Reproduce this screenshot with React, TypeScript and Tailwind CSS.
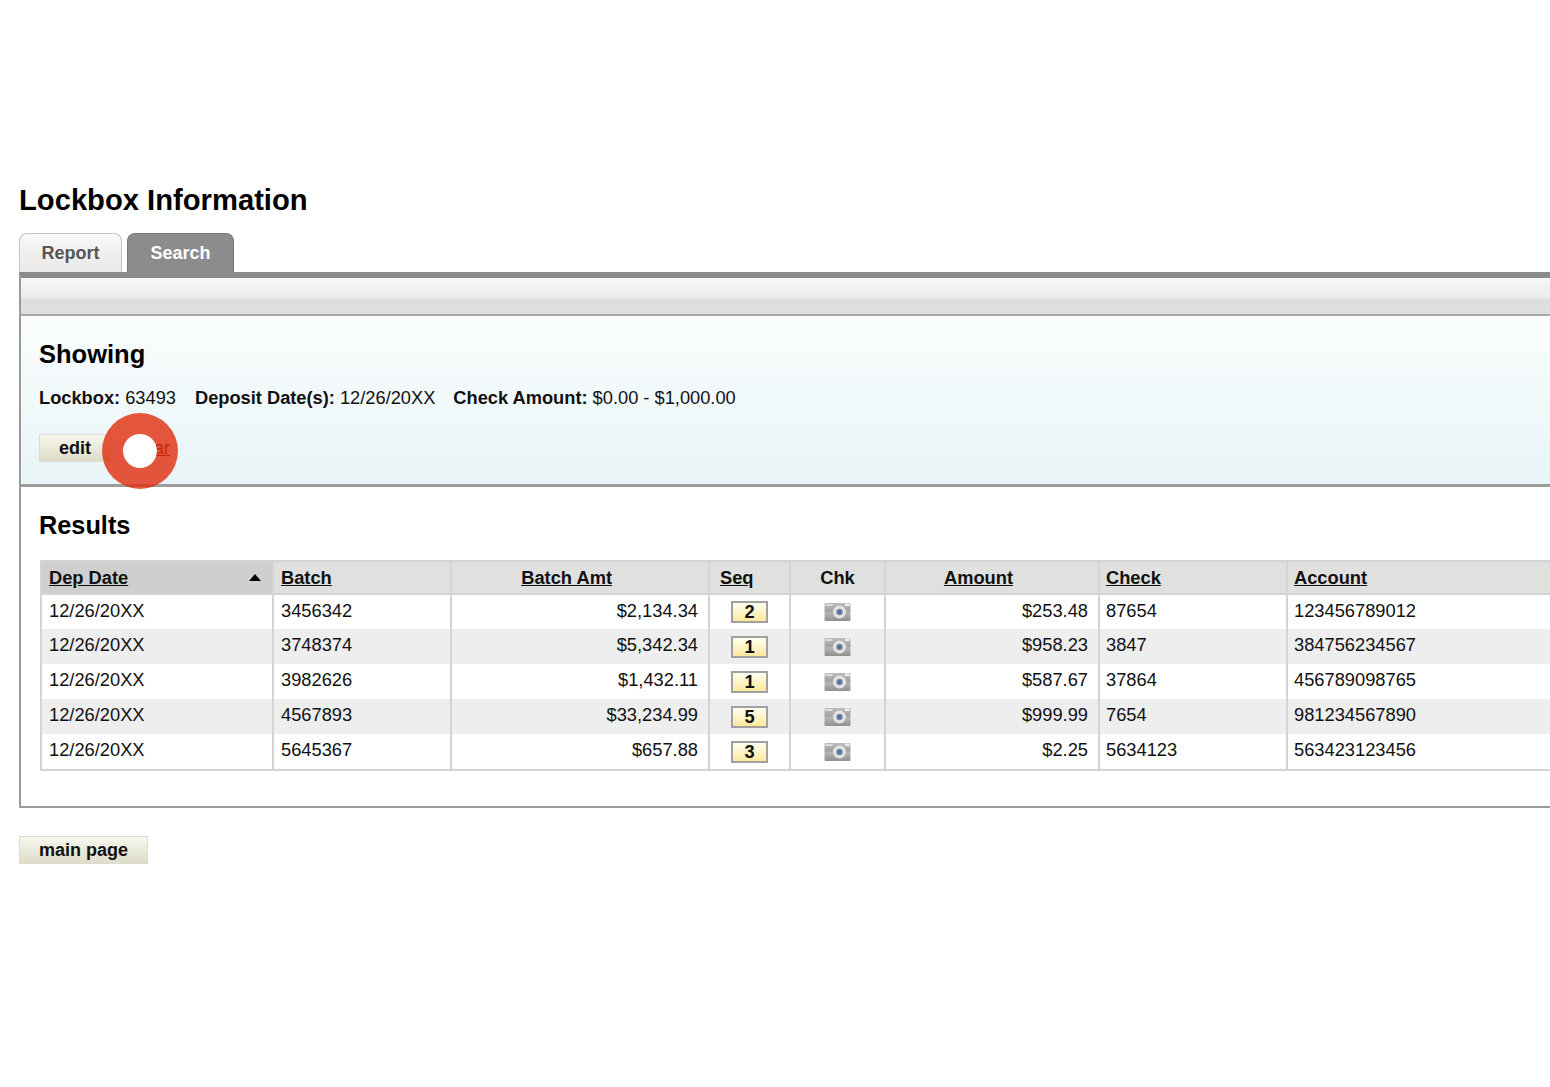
const rows = [
  ["12/26/20XX", "3456342", "$2,134.34", "2", "$253.48", "87654", "123456789012"],
  ["12/26/20XX", "3748374", "$5,342.34", "1", "$958.23", "3847", "384756234567"],
  ["12/26/20XX", "3982626", "$1,432.11", "1", "$587.67", "37864", "456789098765"],
  ["12/26/20XX", "4567893", "$33,234.99", "5", "$999.99", "7654", "981234567890"],
  ["12/26/20XX", "5645367", "$657.88", "3", "$2.25", "5634123", "563423123456"],
];

function CameraIcon() {
  return (
    <svg className="mx-auto block" width="27" height="20" viewBox="0 0 27 20" aria-hidden="true">
      <defs>
        <linearGradient id="cam" x1="0" y1="0" x2="0" y2="1">
          <stop offset="0" stopColor="#bdbdbd" />
          <stop offset="0.45" stopColor="#a2a2a2" />
          <stop offset="0.55" stopColor="#b5b5b5" />
          <stop offset="1" stopColor="#8f8f8f" />
        </linearGradient>
      </defs>
      <rect x="0.5" y="1" width="26" height="18" rx="1" fill="url(#cam)" />
      <rect x="1.5" y="2" width="7" height="2" fill="#dcdcdc" />
      <rect x="21" y="1.5" width="4.5" height="2.5" fill="#f0f0f0" />
      <circle cx="15.5" cy="10" r="6.5" fill="#e4e4e4" />
      <circle cx="15.5" cy="10" r="3.2" fill="#7c8694" />
      <circle cx="15.5" cy="10" r="1.8" fill="#3f6fb5" />
    </svg>
  );
}

function TanButton({ label, className }: { label: string; className: string }) {
  return (
    <button className={`border border-[#dcdcd4] bg-gradient-to-b from-[#f7f7ee] to-[#deddc9] text-[18px] leading-none font-bold text-[#111] ${className}`}>
      {label}
    </button>
  );
}

export default function App() {
  return (
    <div className="h-[1087px] w-[1550px] overflow-hidden bg-white pt-[183px] pl-[19px] font-['Liberation_Sans',Arial,sans-serif] text-[#111]">
      <h1 className="text-[29.2px] leading-[34px] font-bold text-black">Lockbox Information</h1>

      <div className="mt-[16px] flex h-[39px] items-end gap-[5px]">
        <div className="flex h-[39px] w-[103px] items-center justify-center rounded-t-[8px] border border-b-0 border-[#c4c4c4] bg-gradient-to-b from-[#f8f8f8] to-[#e9e9e9] text-[18px] font-bold text-[#555]">
          Report
        </div>
        <div className="flex h-[39px] w-[107px] items-center justify-center rounded-t-[8px] border border-b-0 border-[#777] bg-[#8c8c8c] text-[18px] font-bold text-white">
          Search
        </div>
      </div>

      <div className="w-[1560px] border-t-[6px] border-l-2 border-b-2 border-t-[#8a8a8a] border-l-[#9a9a9a] border-b-[#9a9a9a]">
        <div className="h-[38px] border-b-2 border-[#a8a8a8] bg-[linear-gradient(#f7f7f7,#ececec_52%,#dedede_62%,#dedede)]" />

        <div className="relative h-[171px] border-b-[3px] border-[#9c9c9c] bg-gradient-to-b from-[#fafdfd] to-[#e8f4f7] pl-[18px]">
          <h2 className="pt-[23px] text-[25.5px] leading-[30px] font-bold text-black">Showing</h2>
          <p className="mt-[17px] text-[18.25px] leading-[24px] whitespace-nowrap">
            <b>Lockbox:</b> 63493<span className="ml-[19px]"><b>Deposit Date(s):</b> 12/26/20XX</span>
            <span className="ml-[18px]"><b>Check Amount:</b> $0.00 - $1,000.00</span>
          </p>
          <div className="mt-[24px] flex items-center">
            <TanButton label="edit" className="h-[28px] w-[72px]" />
            <a className="ml-[20px] text-[18px] text-[#5f0803] underline">clear</a>
          </div>
          <div className="absolute top-[97px] left-[81px] h-[76px] w-[76px] rounded-full border-[21px] border-[#e02d0d]/80 bg-white bg-clip-padding" />
        </div>

        <div className="h-[319px] bg-white pl-[18px]">
          <h2 className="pt-[23px] text-[25.3px] leading-[30px] font-bold text-black">Results</h2>
          <table className="mt-[20px] ml-[1px] w-[1530px] table-fixed border-collapse text-[18.3px] leading-[24px]">
            <colgroup>
              <col className="w-[232px]" />
              <col className="w-[178px]" />
              <col className="w-[258px]" />
              <col className="w-[81px]" />
              <col className="w-[95px]" />
              <col className="w-[214px]" />
              <col className="w-[188px]" />
              <col />
            </colgroup>
            <thead>
              <tr className="h-[33px] border-2 border-[#d4d4d4] bg-[#e0e0df] font-bold">
                <th className="border-r-2 border-[#d4d4d4] bg-[#cfcfcf] px-[7px] text-left font-bold">
                  <div className="flex items-center justify-between">
                    <span className="underline">Dep Date</span>
                    <span className="mr-[4px] h-0 w-0 border-x-[6px] border-b-[7px] border-x-transparent border-b-black" />
                  </div>
                </th>
                <th className="border-r-2 border-[#d4d4d4] px-[7px] text-left font-bold underline">Batch</th>
                <th className="border-r-2 border-[#d4d4d4] pr-[96px] text-right font-bold underline">Batch Amt</th>
                <th className="border-r-2 border-[#d4d4d4] px-[10px] text-left font-bold underline">Seq</th>
                <th className="border-r-2 border-[#d4d4d4] text-center font-bold">Chk</th>
                <th className="border-r-2 border-[#d4d4d4] pr-[85px] text-right font-bold underline">Amount</th>
                <th className="border-r-2 border-[#d4d4d4] px-[6px] text-left font-bold underline">Check</th>
                <th className="px-[6px] text-left font-bold underline">Account</th>
              </tr>
            </thead>
            <tbody>
              {rows.map((row, index) => (
                <tr key={row[1]} className={`border-x-2 border-[#d4d4d4] ${index % 2 === 1 ? "bg-[#eeeeee]" : "bg-white"} ${index === rows.length - 1 ? "h-[36px] border-b-2" : "h-[35px]"}`}>
                  <td className="border-r-2 border-[#d4d4d4] px-[7px] pb-[3px]">{row[0]}</td>
                  <td className="border-r-2 border-[#d4d4d4] px-[7px] pb-[3px]">{row[1]}</td>
                  <td className="border-r-2 border-[#d4d4d4] px-[10px] pb-[3px] text-right">{row[2]}</td>
                  <td className="border-r-2 border-[#d4d4d4]">
                    <div className="mx-auto flex h-[22px] w-[37px] items-center justify-center border-2 border-[#a0a0a0] bg-gradient-to-b from-[#fffef0] to-[#fde99a] font-bold">
                      {row[3]}
                    </div>
                  </td>
                  <td className="border-r-2 border-[#d4d4d4]"><CameraIcon /></td>
                  <td className="border-r-2 border-[#d4d4d4] px-[10px] pb-[3px] text-right">{row[4]}</td>
                  <td className="border-r-2 border-[#d4d4d4] px-[6px] pb-[3px]">{row[5]}</td>
                  <td className="px-[6px] pb-[3px]">{row[6]}</td>
                </tr>
              ))}
            </tbody>
          </table>
        </div>
      </div>

      <TanButton label="main page" className="mt-[28px] h-[28px] w-[129px]" />
    </div>
  );
}
